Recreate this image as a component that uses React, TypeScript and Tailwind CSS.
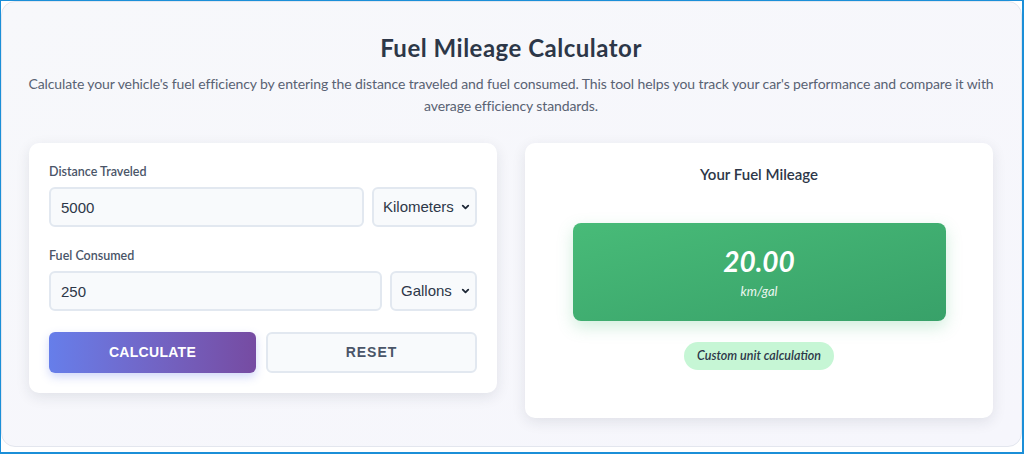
import { ChevronDown } from "lucide-react";

function UnitSelect({ value, width }: { value: string; width: string }) {
  return (
    <div className={`relative ${width} shrink-0`}>
      <select
        defaultValue={value}
        className="h-10 w-full appearance-none rounded-md border-2 border-[#e2e8f0] bg-[#f8fafc] pl-[9px] pr-[16px] font-['Liberation_Sans',Arial,sans-serif] text-[15px] text-[#2d3748] outline-none"
      >
        <option>{value}</option>
      </select>
      <ChevronDown
        className="pointer-events-none absolute right-[6px] top-1/2 h-[11px] w-[11px] -translate-y-1/2 text-[#1f2937]"
        strokeWidth={4}
      />
    </div>
  );
}

function Field({
  label,
  value,
  unit,
  selectWidth,
}: {
  label: string;
  value: string;
  unit: string;
  selectWidth: string;
}) {
  return (
    <div>
      <label className="mb-[6px] block text-[12.5px] font-semibold leading-[18px] text-[#4a5568]">{label}</label>
      <div className="flex gap-2">
        <input
          defaultValue={value}
          className="h-10 min-w-0 flex-1 rounded-md border-2 border-[#e2e8f0] bg-[#f8fafc] px-[10px] font-['Liberation_Sans',Arial,sans-serif] text-[15px] text-[#2d3748] outline-none"
        />
        <UnitSelect value={unit} width={selectWidth} />
      </div>
    </div>
  );
}

export default function App() {
  return (
    <div className="h-[454px] w-[1024px] overflow-hidden border-l border-t border-r-2 border-b-2 border-[#1b8fd8] bg-white font-['Lato','Noto_Sans',sans-serif]">
      <div className="h-[446px] rounded-[14px] border border-[#e3e6ee] bg-gradient-to-br from-[#f7f8fb] to-[#f6f6fc] pl-[27px] pr-[28px] pt-[30px]">
        <h1 className="text-center text-[24px] font-bold leading-8 tracking-[0.5px] text-[#2d3748]">
          Fuel Mileage Calculator
        </h1>
        <p className="-mx-2 mt-[9px] text-center text-[14px] leading-[22px] tracking-[-0.1px] text-[#596273]">
          Calculate your vehicle's fuel efficiency by entering the distance traveled and fuel consumed. This tool helps
          you track your car's performance and compare it with average efficiency standards.
        </p>

        <div className="mt-[26px] grid grid-cols-2 gap-7">
          <div className="self-start rounded-[10px] bg-white px-5 pb-5 pt-[20px] shadow-[0_4px_14px_rgba(30,41,59,0.10)]">
            <div className="flex flex-col gap-[20px]">
              <Field label="Distance Traveled" value="5000" unit="Kilometers" selectWidth="w-[105px]" />
              <Field label="Fuel Consumed" value="250" unit="Gallons" selectWidth="w-[87px]" />
            </div>
            <div className="mt-[21px] flex gap-[10px]">
              <button className="h-[41px] flex-1 rounded-md bg-gradient-to-r from-[#667eea] to-[#764ba2] font-['Liberation_Sans',Arial,sans-serif] text-[14px] font-bold tracking-[0.3px] text-white shadow-[0_4px_10px_rgba(102,126,234,0.30)]">
                CALCULATE
              </button>
              <button className="h-[41px] flex-1 rounded-md border-2 border-[#e2e8f0] bg-[#f8fafc] font-['Liberation_Sans',Arial,sans-serif] text-[14px] font-bold tracking-[1px] text-[#4a5568]">
                RESET
              </button>
            </div>
          </div>

          <div className="flex h-[275px] flex-col items-center rounded-[10px] bg-white pt-[21px] shadow-[0_4px_14px_rgba(30,41,59,0.10)]">
            <h2 className="text-[15px] font-semibold leading-5 text-[#2d3748]">Your Fuel Mileage</h2>
            <div className="mt-[39px] flex h-[98px] w-[373px] flex-col items-center justify-center rounded-lg bg-gradient-to-br from-[#48bb78] to-[#38a169] text-white shadow-[0_6px_16px_rgba(72,187,120,0.25)]">
              <div className="text-[28px] font-bold italic leading-8">20.00</div>
              <div className="mt-[6px] text-[13px] italic leading-4 opacity-90">km/gal</div>
            </div>
            <div className="mt-[21px] rounded-full bg-[#c6f6d5] px-[13px] py-[5px] text-[12.5px] font-semibold italic leading-[18px] text-[#2d3748]">
              Custom unit calculation
            </div>
          </div>
        </div>
      </div>
    </div>
  );
}
